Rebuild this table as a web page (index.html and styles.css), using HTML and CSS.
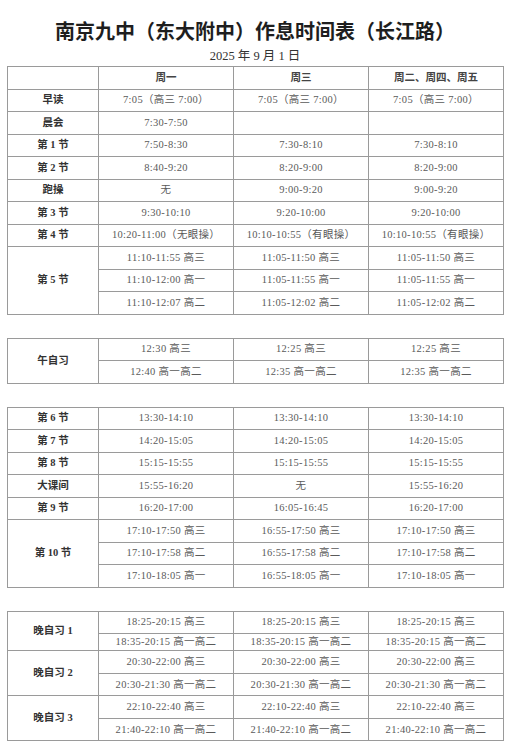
FILE: index.html
```html
<!DOCTYPE html>
<html lang="zh-CN">
<head>
<meta charset="utf-8">
<title>南京九中（东大附中）作息时间表（长江路）</title>
<link rel="stylesheet" href="styles.css">
</head>
<body>
<div class="page">
  <h1 class="title">南京九中（东大附中）作息时间表（长江路）</h1>
  <p class="date">2025 年 9 月 1 日</p>

  <table class="sched first">
    <colgroup><col class="c-label"><col class="c-day"><col class="c-day"><col class="c-day"></colgroup>
    <tr class="head"><th></th><th>周一</th><th>周三</th><th>周二、周四、周五</th></tr>
    <tr><th>早读</th><td>7:05（高三 7:00）</td><td>7:05（高三 7:00）</td><td>7:05（高三 7:00）</td></tr>
    <tr><th>晨会</th><td>7:30-7:50</td><td></td><td></td></tr>
    <tr><th>第 1 节</th><td>7:50-8:30</td><td>7:30-8:10</td><td>7:30-8:10</td></tr>
    <tr><th>第 2 节</th><td>8:40-9:20</td><td>8:20-9:00</td><td>8:20-9:00</td></tr>
    <tr><th>跑操</th><td>无</td><td>9:00-9:20</td><td>9:00-9:20</td></tr>
    <tr><th>第 3 节</th><td>9:30-10:10</td><td>9:20-10:00</td><td>9:20-10:00</td></tr>
    <tr><th>第 4 节</th><td>10:20-11:00（无眼操）</td><td>10:10-10:55（有眼操）</td><td>10:10-10:55（有眼操）</td></tr>
    <tr><th rowspan="3">第 5 节</th><td>11:10-11:55 高三</td><td>11:05-11:50 高三</td><td>11:05-11:50 高三</td></tr>
    <tr><td>11:10-12:00 高一</td><td>11:05-11:55 高一</td><td>11:05-11:55 高一</td></tr>
    <tr><td>11:10-12:07 高二</td><td>11:05-12:02 高二</td><td>11:05-12:02 高二</td></tr>
  </table>

  <table class="sched">
    <colgroup><col class="c-label"><col class="c-day"><col class="c-day"><col class="c-day"></colgroup>
    <tr><th rowspan="2">午自习</th><td>12:30 高三</td><td>12:25 高三</td><td>12:25 高三</td></tr>
    <tr><td>12:40 高一高二</td><td>12:35 高一高二</td><td>12:35 高一高二</td></tr>
  </table>

  <table class="sched">
    <colgroup><col class="c-label"><col class="c-day"><col class="c-day"><col class="c-day"></colgroup>
    <tr><th>第 6 节</th><td>13:30-14:10</td><td>13:30-14:10</td><td>13:30-14:10</td></tr>
    <tr><th>第 7 节</th><td>14:20-15:05</td><td>14:20-15:05</td><td>14:20-15:05</td></tr>
    <tr><th>第 8 节</th><td>15:15-15:55</td><td>15:15-15:55</td><td>15:15-15:55</td></tr>
    <tr><th>大课间</th><td>15:55-16:20</td><td>无</td><td>15:55-16:20</td></tr>
    <tr><th>第 9 节</th><td>16:20-17:00</td><td>16:05-16:45</td><td>16:20-17:00</td></tr>
    <tr><th rowspan="3">第 10 节</th><td>17:10-17:50 高三</td><td>16:55-17:50 高三</td><td>17:10-17:50 高三</td></tr>
    <tr><td>17:10-17:58 高二</td><td>16:55-17:58 高二</td><td>17:10-17:58 高二</td></tr>
    <tr><td>17:10-18:05 高一</td><td>16:55-18:05 高一</td><td>17:10-18:05 高一</td></tr>
  </table>

  <table class="sched">
    <colgroup><col class="c-label"><col class="c-day"><col class="c-day"><col class="c-day"></colgroup>
    <tr><th rowspan="2">晚自习 1</th><td>18:25-20:15 高三</td><td>18:25-20:15 高三</td><td>18:25-20:15 高三</td></tr>
    <tr class="short"><td>18:35-20:15 高一高二</td><td>18:35-20:15 高一高二</td><td>18:35-20:15 高一高二</td></tr>
    <tr><th rowspan="2">晚自习 2</th><td>20:30-22:00 高三</td><td>20:30-22:00 高三</td><td>20:30-22:00 高三</td></tr>
    <tr><td>20:30-21:30 高一高二</td><td>20:30-21:30 高一高二</td><td>20:30-21:30 高一高二</td></tr>
    <tr><th rowspan="2">晚自习 3</th><td>22:10-22:40 高三</td><td>22:10-22:40 高三</td><td>22:10-22:40 高三</td></tr>
    <tr><td>21:40-22:10 高一高二</td><td>21:40-22:10 高一高二</td><td>21:40-22:10 高一高二</td></tr>
  </table>
</div>
</body>
</html>
```

FILE: styles.css
```css
html, body {
  margin: 0;
  padding: 0;
  background: #ffffff;
}

.page {
  width: 510px;
  padding: 19px 7px 0 7px;
  box-sizing: border-box;
  font-family: "Liberation Serif", "Noto Sans CJK SC", serif;
  color: #555;
}

.title {
  margin: 0;
  text-align: center;
  font-family: "Noto Sans CJK SC", sans-serif;
  font-size: 20px;
  line-height: 24px;
  font-weight: 700;
  color: #1e1e1e;
  letter-spacing: 0;
}

.date {
  margin: 5px 0 0 0;
  text-align: center;
  font-size: 12.5px;
  line-height: 16px;
  color: #333;
}

.sched {
  width: 496px;
  table-layout: fixed;
  border-collapse: collapse;
  margin-top: 23px;
  border: 1px solid #8c8c8c;
}

.sched.first {
  margin-top: 2px;
}

.c-label { width: 91px; }
.c-day { width: 135px; }

.sched tr {
  height: 22.5px;
}

.sched tr.short {
  height: 17.3px;
}

.sched th,
.sched td {
  border: 1px solid #9a9a9a;
  padding: 0;
  text-align: center;
  vertical-align: middle;
  line-height: 14px;
  white-space: nowrap;
}

.sched td {
  font-size: 10.5px;
  letter-spacing: 0.3px;
  color: #5a5a5a;
  font-weight: 400;
}

.sched th {
  font-size: 10.5px;
  font-weight: 700;
  color: #333;
}

.sched .head th {
  color: #444;
  font-weight: 600;
}
```
